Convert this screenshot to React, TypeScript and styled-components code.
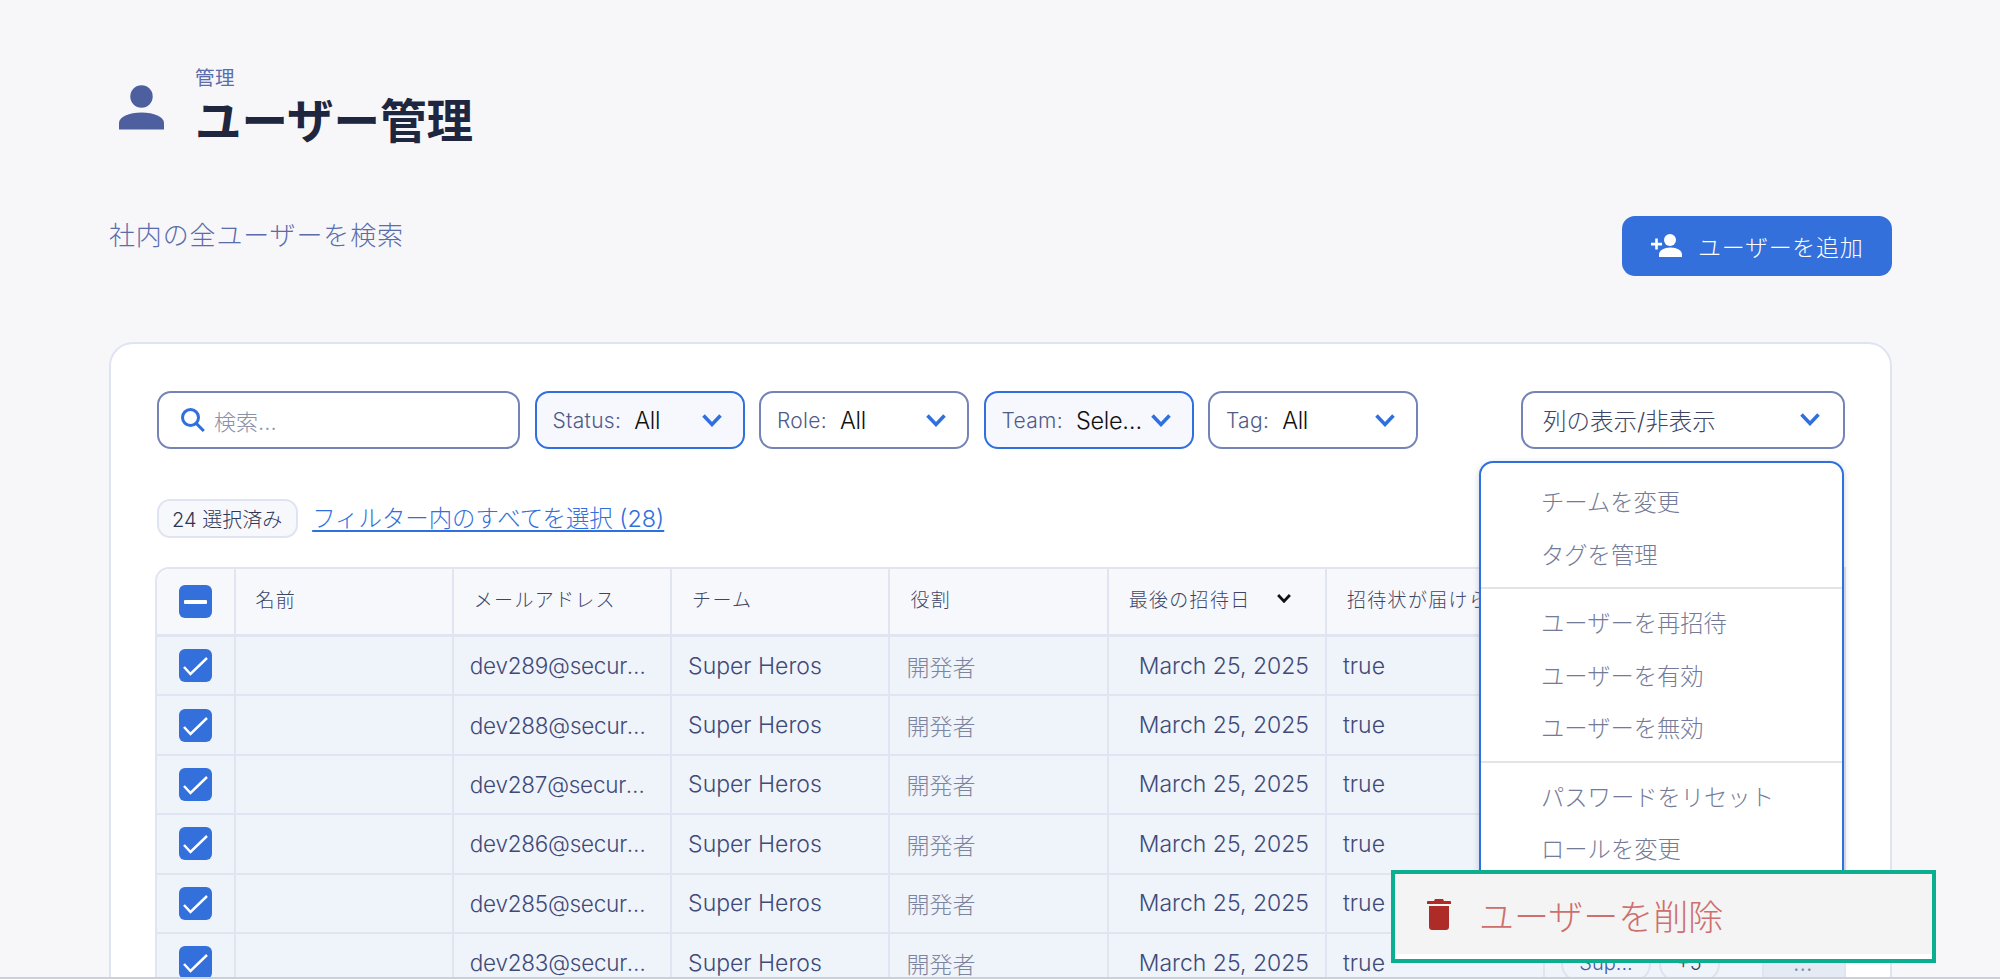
import React from "react";
import styled, { createGlobalStyle } from "styled-components";

const Global = createGlobalStyle`
  html, body { margin: 0; padding: 0; background: #f7f7fa; }
  * { box-sizing: border-box; }
  body { font-family: Inter, "Noto Sans CJK JP", sans-serif; }
`;

const Page = styled.div`
  position: relative;
  height: 979px;
  overflow: hidden;
  padding: 65px 108px 0 109px;
  background: #f7f7fa;
  border-bottom: 2px solid #cbd0db;
`;
const TitleBlock = styled.header`
  display: flex;
  align-items: flex-start;
  gap: 32px;
  margin-left: 10px;
`;
const PersonSvg = styled.svg`
  width: 45px;
  height: 45px;
  margin-top: 20px;
  flex: none;
`;
const Crumb = styled.div`
  font-size: 19.5px;
  line-height: 26px;
  color: #5a6cab;
  letter-spacing: 0.6px;
  margin-left: -1px;
`;
const Title = styled.h1`
  margin: 2px 0 0 -1px;
  font-size: 46.5px;
  line-height: 56px;
  font-weight: 700;
  color: #1e2640;
`;
const IntroRow = styled.div`
  display: flex;
  justify-content: space-between;
  align-items: flex-start;
  margin-top: 67px;
`;
const Subtitle = styled.p`
  margin: 1px 0 0;
  font-size: 26px;
  line-height: 38px;
  color: #5a6cab;
  letter-spacing: 0.85px;
  font-weight: 300;
`;
const AddButton = styled.button`
  display: flex;
  align-items: center;
  gap: 15px;
  width: 270px;
  height: 60px;
  padding: 0 0 1px 29px;
  border: none;
  border-radius: 13px;
  background: #3370db;
  color: #fff;
  font-family: inherit;
  font-size: 23px;
  font-weight: 300;
  letter-spacing: 0.7px;
`;
const Card = styled.section`
  margin-top: 66px;
  height: 800px;
  padding: 47px 45px 0 46px;
  background: #fff;
  border: 2px solid #e0e4f2;
  border-radius: 24px;
`;
const Toolbar = styled.div`
  display: flex;
  gap: 14.5px;
  height: 58px;
`;
const SearchBox = styled.div`
  display: flex;
  align-items: center;
  gap: 9px;
  width: 363px;
  padding-left: 22px;
  border: 2px solid #7584b8;
  border-radius: 14px;
  color: #8a90a8;
  font-size: 22px;
  font-weight: 300;
`;
const Select = styled.div<{ $active?: boolean }>`
  display: flex;
  align-items: center;
  width: 210px;
  padding: 0 21px 0 16px;
  border: 2px solid ${(p) => (p.$active ? "#2f6fde" : "#7584b8")};
  border-radius: 14px;
  background: ${(p) => (p.$active ? "#f6f8fd" : "#fff")};
`;
const SelectLabel = styled.span`
  font-size: 21px;
  font-weight: 300;
  letter-spacing: 0.3px;
  color: #4f5c8a;
  margin-right: 13px;
  flex: none;
`;
const SelectValue = styled.span`
  flex: 1;
  min-width: 0;
  margin-right: 5px;
  font-size: 23.5px;
  font-weight: 300;
  letter-spacing: -0.3px;
  color: #111;
  white-space: nowrap;
  overflow: hidden;
  text-overflow: ellipsis;
`;
const Chevron = styled.svg<{ $dark?: boolean }>`
  width: ${(p) => (p.$dark ? "14px" : "20px")};
  height: ${(p) => (p.$dark ? "9px" : "13px")};
  flex: none;
  fill: none;
  stroke: ${(p) => (p.$dark ? "#111" : "#2f6fde")};
  stroke-width: ${(p) => (p.$dark ? 4 : 3.5)};
`;
const ColumnWrap = styled.div`
  position: relative;
  margin-left: auto;
  width: 324px;
`;
const ColumnSelect = styled.div`
  display: flex;
  align-items: center;
  justify-content: space-between;
  height: 100%;
  padding: 0 23px 1px 20px;
  border: 2px solid #7584b8;
  border-radius: 14px;
  font-size: 23.5px;
  font-weight: 300;
  color: #3d4566;
`;
const Menu = styled.div`
  position: absolute;
  top: calc(100% + 12px);
  right: 1px;
  width: 365px;
  height: 460px;
  padding: 12px 0;
  background: #fff;
  border: 2px solid #2f6fde;
  border-radius: 14px;
  box-shadow: 0 2px 6px rgba(60, 70, 100, 0.25);
  z-index: 2;
`;
const MenuItem = styled.div`
  height: 52.5px;
  display: flex;
  align-items: center;
  padding-left: 60px;
  font-size: 23.3px;
  font-weight: 300;
  color: #747b98;
`;
const MenuDivider = styled.div`
  height: 2px;
  margin: 7px 0;
  background: #e4e4e8;
`;
const SelectionRow = styled.div`
  display: flex;
  align-items: center;
  gap: 14px;
  margin-top: 50px;
  height: 39px;
`;
const CountChip = styled.span`
  display: flex;
  align-items: center;
  height: 39px;
  padding: 0 14px 0 13px;
  border: 2px solid #e0e4f2;
  border-radius: 13px;
  background: #f7f8fc;
  font-size: 20px;
  font-weight: 300;
  color: #2f3655;
`;
const SelectAll = styled.a`
  font-size: 23.4px;
  font-weight: 300;
  line-height: 34px;
  color: #2f6fde;
  text-decoration: underline;
  text-underline-offset: 3px;
`;
const Table = styled.div`
  display: grid;
  grid-template-columns: 78.5px repeat(7, 218.3px) 1fr;
  grid-template-rows: 68px;
  grid-auto-rows: 59.4px;
  width: 1691px;
  margin: 29px 0 0 -2px;
  border-top: 2px solid #e1e5f1;
  border-left: 2px solid #e1e5f1;
  border-top-left-radius: 14px;
`;
const HeadCell = styled.div`
  display: flex;
  align-items: center;
  gap: 26px;
  padding: 0 0 6px 20px;
  background: #f7f8fc;
  border-right: 2px solid #e1e5f1;
  border-bottom: 3px solid #e1e5f1;
  font-size: 19px;
  font-weight: 300;
  letter-spacing: 1.3px;
  color: #3d4566;
  white-space: nowrap;
  overflow: hidden;
`;
const BoxHeadCell = styled(HeadCell)`
  justify-content: center;
  padding: 0;
  border-top-left-radius: 14px;
`;
const Cell = styled.div<{ $tone?: "muted"; $inset?: boolean; $end?: boolean }>`
  display: flex;
  align-items: center;
  gap: 8px;
  min-width: 0;
  padding: 0 ${(p) => (p.$end ? "2px" : "20px")} 0 ${(p) => (p.$end ? "0" : p.$inset ? "30px" : "16px")};
  background: ${(p) => (p.$end ? "#e4ebf5" : "#eff3fa")};
  border-right: 2px solid #e1e5f1;
  border-bottom: 2px solid #e1e5f1;
  font-size: 23px;
  font-weight: 300;
  white-space: nowrap;
  color: ${(p) => (p.$tone === "muted" ? "#7d84a0" : "#3f4a78")};
  justify-content: ${(p) => (p.$end ? "center" : "flex-start")};
`;
const BoxCell = styled(Cell)`
  justify-content: center;
  padding: 0;
`;
const CellText = styled.span`
  font-size: 22.5px;
  letter-spacing: -0.25px;
  white-space: nowrap;
  overflow: hidden;
  text-overflow: ellipsis;
`;
const TagChip = styled.span<{ $dark?: boolean }>`
  display: flex;
  align-items: center;
  justify-content: center;
  height: 38px;
  padding: 0 16px;
  border: 2px solid #dfe3f0;
  border-radius: 18px;
  font-size: 20px;
  color: ${(p) => (p.$dark ? "#3b4262" : "#4358a8")};
`;
const CheckBox = styled.span`
  display: flex;
  align-items: center;
  justify-content: center;
  width: 33px;
  height: 33px;
  border-radius: 6px;
  background: #3370db;
`;
const Dash = styled.span`
  width: 23px;
  height: 4px;
  border-radius: 1px;
  background: #fff;
`;
const CheckSvg = styled.svg`
  width: 33px;
  height: 33px;
  fill: none;
  stroke: #fff;
  stroke-width: 2.5;
`;
const DeleteBar = styled.div`
  position: absolute;
  left: 1391px;
  top: 870px;
  width: 545px;
  height: 93px;
  display: flex;
  align-items: center;
  gap: 28px;
  padding: 0 0 5px 32px;
  background: #f4f4f4;
  border: 4px solid #0bae8f;
  box-shadow: inset 0 -5px 0 #fff;
  z-index: 5;
  font-size: 35px;
  font-weight: 300;
  color: #cc6f6d;
`;

const Person = () => (
  <PersonSvg viewBox="0 0 45 45" fill="#4e5fa0">
    <circle cx="22.5" cy="11.5" r="11.2" />
    <path d="M0 44.5V38C0 32 10 27.6 22.5 27.6S45 32 45 38v6.5Z" />
  </PersonSvg>
);
const AddUser = () => (
  <svg width="32" height="24" viewBox="0 0 32 24" fill="#fff">
    <circle cx="19" cy="6" r="6" />
    <path d="M8 23v-2.5C8 16.5 13 13.5 19.5 13.5S31 16.5 31 20.5V23Z" />
    <path d="M0 8.8h4.2V4.6h2.6v4.2H11v2.6H6.8v4.2H4.2v-4.2H0Z" />
  </svg>
);
const Search = () => (
  <svg width="24" height="24" viewBox="0 0 24 24" fill="none" stroke="#2f6fde" strokeWidth="3">
    <circle cx="9.5" cy="9.5" r="8" />
    <path d="m15.2 15.4 7.6 7.6" />
  </svg>
);
const Down = ({ dark }: { dark?: boolean }) => (
  <Chevron $dark={dark} viewBox="0 0 20 13">
    <path d="M1.5 1.5 10 10.5l8.5-9" />
  </Chevron>
);
const Trash = () => (
  <svg width="24" height="31" viewBox="0 0 24 31" fill="#ad2c28">
    <path d="M8 0h8l1 2h6c.6 0 1 .5 1 1v2H0V3c0-.5.4-1 1-1h6Z" />
    <path d="M2 7h20v21c0 1.700-1.300 3-3 3H5c-1.700 0-3-1.300-3-3Z" />
  </svg>
);
const Tick = () => (
  <CheckSvg viewBox="0 0 33 33">
    <path d="m5 18 6.500 7L28 9" />
  </CheckSvg>
);

const ids = [289, 288, 287, 286, 285, 283];
const groups = [
  ["チームを変更", "タグを管理"],
  ["ユーザーを再招待", "ユーザーを有効", "ユーザーを無効"],
  ["パスワードをリセット", "ロールを変更"],
];

export default function App() {
  return (
    <Page>
      <Global />
      <TitleBlock>
        <Person />
        <div>
          <Crumb>管理</Crumb>
          <Title>ユーザー管理</Title>
        </div>
      </TitleBlock>
      <IntroRow>
        <Subtitle>社内の全ユーザーを検索</Subtitle>
        <AddButton>
          <AddUser />
          ユーザーを追加
        </AddButton>
      </IntroRow>
      <Card>
        <Toolbar>
          <SearchBox>
            <Search />
            検索...
          </SearchBox>
          <Select $active>
            <SelectLabel>Status:</SelectLabel>
            <SelectValue>All</SelectValue>
            <Down />
          </Select>
          <Select>
            <SelectLabel>Role:</SelectLabel>
            <SelectValue>All</SelectValue>
            <Down />
          </Select>
          <Select $active>
            <SelectLabel>Team:</SelectLabel>
            <SelectValue>Selected</SelectValue>
            <Down />
          </Select>
          <Select>
            <SelectLabel>Tag:</SelectLabel>
            <SelectValue>All</SelectValue>
            <Down />
          </Select>
          <ColumnWrap>
            <ColumnSelect>
              列の表示/非表示
              <Down />
            </ColumnSelect>
            <Menu>
              {groups.map((g, i) => (
                <React.Fragment key={i}>
                  {i > 0 && <MenuDivider />}
                  {g.map((t) => (
                    <MenuItem key={t}>{t}</MenuItem>
                  ))}
                </React.Fragment>
              ))}
            </Menu>
          </ColumnWrap>
        </Toolbar>
        <SelectionRow>
          <CountChip>24 選択済み</CountChip>
          <SelectAll>フィルター内のすべてを選択 (28)</SelectAll>
        </SelectionRow>
        <Table>
          <BoxHeadCell>
            <CheckBox>
              <Dash />
            </CheckBox>
          </BoxHeadCell>
          <HeadCell>名前</HeadCell>
          <HeadCell>メールアドレス</HeadCell>
          <HeadCell>チーム</HeadCell>
          <HeadCell>役割</HeadCell>
          <HeadCell>
            最後の招待日
            <Down dark />
          </HeadCell>
          <HeadCell>招待状が届けられました</HeadCell>
          <HeadCell>タグ</HeadCell>
          <HeadCell />
          {ids.map((id) => (
            <React.Fragment key={id}>
              <BoxCell>
                <CheckBox>
                  <Tick />
                </CheckBox>
              </BoxCell>
              <Cell />
              <Cell>
                <CellText>dev{id}@securesamurai.com</CellText>
              </Cell>
              <Cell>Super Heros</Cell>
              <Cell $tone="muted">開発者</Cell>
              <Cell $inset>March 25, 2025</Cell>
              <Cell>true</Cell>
              <Cell>
                <TagChip>Sup...</TagChip>
                <TagChip $dark>+5</TagChip>
              </Cell>
              <Cell $end $tone="muted">
                ...
              </Cell>
            </React.Fragment>
          ))}
        </Table>
      </Card>
      <DeleteBar>
        <Trash />
        ユーザーを削除
      </DeleteBar>
    </Page>
  );
}
